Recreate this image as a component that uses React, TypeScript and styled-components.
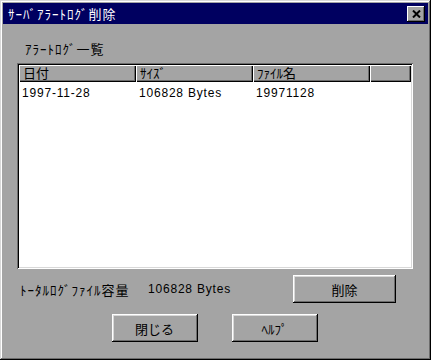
import styled, { createGlobalStyle } from "styled-components";

const GlobalStyle = createGlobalStyle`
  html, body {
    margin: 0;
    padding: 0;
    background: #a4a4a4;
  }
  * {
    box-sizing: border-box;
  }
`;

const jp = `"Noto Sans CJK JP", "Liberation Sans", sans-serif`;
const latin = `"Liberation Sans", "Noto Sans CJK JP", sans-serif`;

const Window = styled.div`
  width: 431px;
  height: 360px;
  background: #a4a4a4;
  padding: 3px;
  display: flex;
  flex-direction: column;
  box-shadow: inset -1px -1px #000, inset 1px 1px #d8d8d8,
    inset -2px -2px #6c6c6c, inset 2px 2px #fff;
`;

const TitleBar = styled.div`
  height: 21px;
  background: #000060;
  display: flex;
  align-items: center;
  justify-content: space-between;
  padding: 0 3px 0 5px;
`;

const Title = styled.span`
  color: #fff;
  font-family: ${jp};
  font-size: 13px;
  letter-spacing: 1px;
`;

const CloseBtn = styled.button`
  width: 18px;
  height: 16px;
  padding: 0;
  border: none;
  background: #a4a4a4;
  display: flex;
  align-items: center;
  justify-content: center;
  box-shadow: inset -1px -1px #000, inset 1px 1px #fff,
    inset -2px -2px #6c6c6c;
`;

const Body = styled.div`
  flex: 1;
  display: flex;
  flex-direction: column;
  padding: 13px 15px 0 14px;
`;

const GroupLabel = styled.div`
  font-family: ${jp};
  font-size: 13px;
  letter-spacing: 1px;
  color: #000;
  margin-left: 8px;
  height: 26px;
  line-height: 24px;
`;

const ListView = styled.div`
  width: 396px;
  height: 206px;
  background: #fff;
  padding: 2px;
  box-shadow: inset 1px 1px #6c6c6c, inset -1px -1px #fff,
    inset 2px 2px #000, inset -2px -2px #d8d8d8;
  display: flex;
  flex-direction: column;
`;

const HeaderRow = styled.div`
  display: flex;
  height: 17px;
  background: #a4a4a4;
`;

const HeaderCell = styled.div<{ $w: number; $flex?: boolean }>`
  width: ${(p) => p.$w}px;
  flex: ${(p) => (p.$flex ? 1 : "none")};
  height: 17px;
  font-family: ${jp};
  font-size: 13px;
  line-height: 16px;
  padding-left: 4px;
  color: #000;
  box-shadow: inset 1px 1px #fff, inset -1px -1px #000,
    inset -2px -2px #6c6c6c;
`;

const Row = styled.div`
  display: flex;
  height: 16px;
  margin-top: 3px;
`;

const Cell = styled.div<{ $w: number }>`
  width: ${(p) => p.$w}px;
  font-family: ${latin};
  font-size: 12px;
  letter-spacing: 0.8px;
  line-height: 16px;
  padding-left: 3px;
  color: #000;
`;

const Footer = styled.div`
  display: flex;
  align-items: center;
  margin-top: 6px;
  height: 28px;
`;

const TotalLabel = styled.span`
  font-family: ${jp};
  font-size: 13px;
  letter-spacing: 1px;
  margin-left: 3px;
  width: 128px;
  white-space: nowrap;
`;

const TotalValue = styled.span`
  font-family: ${latin};
  font-size: 12px;
  letter-spacing: 0.8px;
  width: 145px;
`;

const Button = styled.button<{ $w: number }>`
  width: ${(p) => p.$w}px;
  height: 28px;
  background: #a4a4a4;
  border: none;
  padding: 0;
  font-family: ${jp};
  font-size: 13px;
  color: #000;
  box-shadow: inset -1px -1px #000, inset 1px 1px #fff,
    inset -2px -2px #6c6c6c, inset 2px 2px #d8d8d8;
`;

const ButtonRow = styled.div`
  display: flex;
  justify-content: center;
  gap: 34px;
  margin-top: 11px;
  margin-left: -1px;
`;

function App() {
  return (
    <>
      <GlobalStyle />
      <Window>
        <TitleBar>
          <Title>ｻｰﾊﾞｱﾗｰﾄﾛｸﾞ削除</Title>
          <CloseBtn aria-label="close">
            <svg width="9" height="8" viewBox="0 0 9 8">
              <path
                d="M1 0.5 L8 7.5 M8 0.5 L1 7.5"
                stroke="#000"
                strokeWidth="2"
              />
            </svg>
          </CloseBtn>
        </TitleBar>
        <Body>
          <GroupLabel>ｱﾗｰﾄﾛｸﾞ一覧</GroupLabel>
          <ListView>
            <HeaderRow>
              <HeaderCell $w={117}>日付</HeaderCell>
              <HeaderCell $w={117}>ｻｲｽﾞ</HeaderCell>
              <HeaderCell $w={117}>ﾌｧｲﾙ名</HeaderCell>
              <HeaderCell $w={40} $flex />
            </HeaderRow>
            <Row>
              <Cell $w={117}>1997-11-28</Cell>
              <Cell $w={117}>106828 Bytes</Cell>
              <Cell $w={117}>19971128</Cell>
            </Row>
          </ListView>
          <Footer>
            <TotalLabel>ﾄｰﾀﾙﾛｸﾞﾌｧｲﾙ容量</TotalLabel>
            <TotalValue>106828 Bytes</TotalValue>
            <Button $w={103}>削除</Button>
          </Footer>
          <ButtonRow>
            <Button $w={86}>閉じる</Button>
            <Button $w={86}>ﾍﾙﾌﾟ</Button>
          </ButtonRow>
        </Body>
      </Window>
    </>
  );
}

export default App;
